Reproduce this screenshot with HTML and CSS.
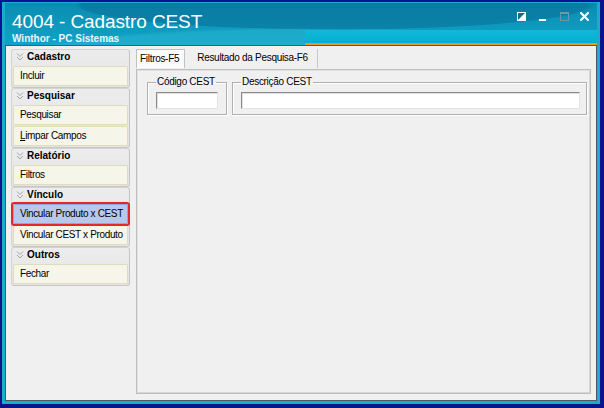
FILE: index.html
```html
<!DOCTYPE html>
<html lang="pt-BR">
<head>
<meta charset="utf-8">
<title>4004 - Cadastro CEST</title>
<link rel="stylesheet" href="styles.css">
</head>
<body>
<div class="window">
  <header class="titlebar">
    <div class="titles">
      <div class="title">4004 - Cadastro CEST</div>
      <div class="subtitle">Winthor - PC Sistemas</div>
    </div>
    <div class="controls">
      <svg class="ctl ctl-style" width="9" height="9" viewBox="0 0 9 9">
        <rect x="0.5" y="0.5" width="8" height="8" fill="#1b6a86" stroke="#ffffff"/>
        <polygon points="9,0 9,9 0,9" fill="#ffffff"/>
      </svg>
      <svg class="ctl ctl-min" width="7" height="9" viewBox="0 0 7 9">
        <rect x="0" y="7" width="7" height="2" fill="#ffffff"/>
      </svg>
      <svg class="ctl ctl-max" width="9" height="9" viewBox="0 0 9 9">
        <rect x="0.5" y="0.5" width="8" height="8" fill="none" stroke="#6f97a8"/>
        <rect x="0" y="0" width="9" height="2" fill="#6f97a8"/>
      </svg>
      <svg class="ctl ctl-close" width="9" height="9" viewBox="0 0 9 9">
        <path d="M1 1 L8 8 M8 1 L1 8" stroke="#ffffff" stroke-width="2" stroke-linecap="square"/>
      </svg>
    </div>
  </header>

  <div class="client">
    <nav class="sidebar">
      <section class="group">
        <div class="ghead"><svg class="chev" width="8" height="8" viewBox="0 0 8 8"><path d="M1 0.5 L4 3.5 L7 0.5 M1 4 L4 7 L7 4" fill="none" stroke="#a5a5a5" stroke-width="1"/></svg>Cadastro</div>
        <div class="item">Incluir</div>
      </section>
      <section class="group">
        <div class="ghead"><svg class="chev" width="8" height="8" viewBox="0 0 8 8"><path d="M1 0.5 L4 3.5 L7 0.5 M1 4 L4 7 L7 4" fill="none" stroke="#a5a5a5" stroke-width="1"/></svg>Pesquisar</div>
        <div class="item">Pesquisar</div>
        <div class="item"><u>L</u>impar Campos</div>
      </section>
      <section class="group">
        <div class="ghead"><svg class="chev" width="8" height="8" viewBox="0 0 8 8"><path d="M1 0.5 L4 3.5 L7 0.5 M1 4 L4 7 L7 4" fill="none" stroke="#a5a5a5" stroke-width="1"/></svg>Relatório</div>
        <div class="item">Filtros</div>
      </section>
      <section class="group">
        <div class="ghead"><svg class="chev" width="8" height="8" viewBox="0 0 8 8"><path d="M1 0.5 L4 3.5 L7 0.5 M1 4 L4 7 L7 4" fill="none" stroke="#a5a5a5" stroke-width="1"/></svg>Vínculo</div>
        <div class="item item-selected">Vincular Produto x CEST</div>
        <div class="item">Vincular CEST x Produto</div>
      </section>
      <section class="group">
        <div class="ghead"><svg class="chev" width="8" height="8" viewBox="0 0 8 8"><path d="M1 0.5 L4 3.5 L7 0.5 M1 4 L4 7 L7 4" fill="none" stroke="#a5a5a5" stroke-width="1"/></svg>Outros</div>
        <div class="item">Fechar</div>
      </section>
    </nav>

    <div class="tabs">
      <div class="tabrow">
        <div class="tab tab-active">Filtros-F5</div>
        <div class="tab">Resultado da Pesquisa-F6</div>
      </div>
      <div class="tabpage">
        <fieldset class="fs fs-codigo">
          <legend>Código CEST</legend>
          <div class="input input-codigo"></div>
        </fieldset>
        <fieldset class="fs fs-desc">
          <legend>Descrição CEST</legend>
          <div class="input input-desc"></div>
        </fieldset>
      </div>
    </div>
  </div>
</div>
</body>
</html>
```

FILE: styles.css
```css
html, body {
  margin: 0;
  padding: 0;
}

body {
  width: 604px;
  height: 408px;
  overflow: hidden;
  background: #0a128c;
  font-family: "Liberation Sans", Arial, sans-serif;
  font-size: 10px;
  color: #000;
}

.window {
  box-sizing: border-box;
  width: 604px;
  height: 408px;
  border-style: solid;
  border-color: #0a128c;
  border-width: 2px 4px 4px 2px;
  background: #1cabc8;
  padding: 1px 3px 3px 3px;
  display: flex;
  flex-direction: column;
}

/* ---------- title bar ---------- */
.titlebar {
  height: 42px;
  flex: none;
  display: flex;
  justify-content: space-between;
  padding: 0 8px 0 7px;
  background:
    linear-gradient(#e39b1f, #e39b1f) right 0 bottom 0 / 292px 2px no-repeat,
    linear-gradient(180deg, #12b8d8, #05aecf) right 0 bottom 2px / 292px 13px no-repeat,
    radial-gradient(ellipse 420px 40px at 330px 2px, rgba(8, 110, 150, 0.55) 60%, rgba(8, 110, 150, 0) 62%) no-repeat,
    radial-gradient(ellipse 520px 60px at 300px 60px, rgba(60, 190, 220, 0.35) 55%, rgba(60, 190, 220, 0) 60%) no-repeat,
    linear-gradient(180deg, #0b8cb2 0%, #0d99bd 55%, #0ea4c6 100%);
}

.titles {
  display: flex;
  flex-direction: column;
}

.title {
  color: #ffffff;
  font-size: 19px;
  line-height: 22px;
  margin-top: 8px;
  letter-spacing: -0.1px;
}

.subtitle {
  color: #e8f6fa;
  font-weight: bold;
  font-size: 10px;
  line-height: 12px;
}

.controls {
  display: flex;
  align-items: flex-start;
  padding-top: 9px;
}

.ctl {
  display: block;
}

.ctl-min { margin-left: 13px; }
.ctl-max { margin-left: 14px; }
.ctl-close { margin-left: 11px; }

/* ---------- client area ---------- */
.client {
  flex: 1;
  display: flex;
  border: 1px solid #4b5b62;
  background: #f0f0f0;
  min-height: 0;
}

.sidebar {
  width: 129px;
  flex: none;
  box-sizing: border-box;
  padding: 3px 0 0 5px;
}

.group {
  width: 119px;
  box-sizing: border-box;
  border: 1px solid #d3d3d3;
  border-right-color: #c4c4c4;
  border-bottom-color: #c6c6c6;
  border-radius: 3px;
  background: linear-gradient(180deg, #ececec 0%, #e5e5e5 100%);
  padding: 0 1px 1px 1px;
}

.ghead {
  height: 16px;
  box-sizing: border-box;
  line-height: 14px;
  padding: 0 0 2px 3px;
  font-weight: bold;
  display: flex;
  align-items: center;
  gap: 3px;
}

.chev {
  display: block;
  flex: none;
}

.item {
  height: 20px;
  box-sizing: border-box;
  border: 1px solid #dfdcbd;
  border-radius: 1px;
  background: #f6f5e9;
  line-height: 18px;
  padding-left: 6px;
  letter-spacing: -0.35px;
  white-space: nowrap;
}

.item + .item {
  margin-top: 1px;
}

.item-selected {
  background: #b7c8ea;
  border-color: #8ea6d8;
  outline: 2px solid #e4262d;
}

/* ---------- tabs ---------- */
.tabs {
  flex: 1;
  display: flex;
  flex-direction: column;
  padding: 3px 5px 6px 1px;
}

.tabrow {
  display: flex;
  height: 19px;
  flex: none;
}

.tab {
  line-height: 18px;
  padding: 0 9px 0 12px;
  letter-spacing: -0.3px;
  border-right: 1px solid #c6c6c6;
  white-space: nowrap;
}

.tab-active {
  background: #fbfbfb;
  border: 1px solid #c2c2c2;
  border-bottom: none;
  padding: 0 5px 0 3px;
}

.tabpage {
  flex: 1;
  margin-top: 1px;
  border: 1px solid #bdbdbd;
  box-shadow: inset 1px 1px 0 #e2e2e2, inset -1px -1px 0 #d6d6d6;
  background: #f0f0f0;
  display: flex;
  align-items: flex-start;
  gap: 5px;
  padding: 6px 2px 0 10px;
}

.fs {
  margin: 0;
  border: 1px solid #b0b0b0;
  box-shadow: 1px 1px 0 #ffffff, inset 1px 1px 0 #ffffff;
  padding: 4px 8px 5px 8px;
  min-width: 0;
}

.fs legend {
  padding: 0 1px;
  font-size: 10px;
  line-height: 12px;
  letter-spacing: -0.3px;
}

.fs-codigo {
  width: 62px;
}

.fs-desc {
  width: 338px;
  padding-right: 7px;
}

.input {
  height: 17px;
  box-sizing: border-box;
  background: #ffffff;
  border: 1px solid #aaaaaa;
  border-top-color: #8a8a8a;
  border-left-color: #8a8a8a;
  border-bottom-color: #e4e4e4;
  border-right-color: #e4e4e4;
  box-shadow: inset 1px 1px 0 #e0e0e0;
}

.input-codigo { width: 62px; }
.input-desc { width: 339px; }
```
